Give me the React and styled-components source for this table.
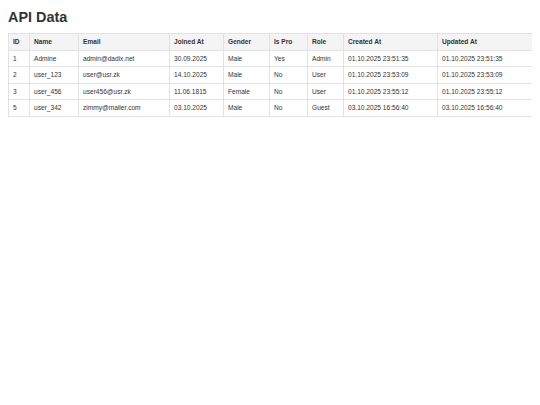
import React from "react";
import styled, { createGlobalStyle } from "styled-components";

const Global = createGlobalStyle`
  html, body { background: #ffffff; }
  body {
    margin: 8px;
    font-family: "Liberation Sans", Arial, Helvetica, sans-serif;
    color: #333333;
  }
`;

const Page = styled.div`
  display: flex;
  flex-direction: column;
  gap: 7px;
`;

const Title = styled.h1`
  margin: 0;
  font-size: 14.4px;
  line-height: 18px;
  font-weight: 700;
  color: #333333;
`;

const Table = styled.table`
  width: 524px;
  border-collapse: collapse;
  table-layout: fixed;
  font-size: 6.6px;
  line-height: 7.6px;
`;

const Col = styled.col`
  width: ${(p) => p.$w}px;
`;

const Th = styled.th`
  background: #f4f4f4;
  border: 1px solid #e2e2e2;
  padding: 4px;
  text-align: left;
  font-weight: 700;
  color: #333333;
  white-space: nowrap;
`;

const Td = styled.td`
  border: 1px solid #e2e2e2;
  padding: 4px;
  text-align: left;
  color: #333333;
  white-space: nowrap;
`;

const columns = [
  ["ID", 21],
  ["Name", 49],
  ["Email", 91],
  ["Joined At", 54],
  ["Gender", 46],
  ["Is Pro", 38],
  ["Role", 36],
  ["Created At", 94],
  ["Updated At", 95],
];

const rows = [
  ["1", "Admine", "admin@dadix.net", "30.09.2025", "Male", "Yes", "Admin", "01.10.2025 23:51:35", "01.10.2025 23:51:35"],
  ["2", "user_123", "user@usr.zk", "14.10.2025", "Male", "No", "User", "01.10.2025 23:53:09", "01.10.2025 23:53:09"],
  ["3", "user_456", "user456@usr.zk", "11.06.1815", "Female", "No", "User", "01.10.2025 23:55:12", "01.10.2025 23:55:12"],
  ["5", "user_342", "zimmy@mailer.com", "03.10.2025", "Male", "No", "Guest", "03.10.2025 16:56:40", "03.10.2025 16:56:40"],
];

export default function App() {
  return (
    <>
      <Global />
      <Page>
        <Title>API Data</Title>
        <Table>
          <colgroup>
            {columns.map(([label, w]) => (
              <Col key={label} $w={w} />
            ))}
          </colgroup>
          <thead>
            <tr>
              {columns.map(([label]) => (
                <Th key={label}>{label}</Th>
              ))}
            </tr>
          </thead>
          <tbody>
            {rows.map((r) => (
              <tr key={r[0]}>
                {r.map((c, i) => (
                  <Td key={i}>{c}</Td>
                ))}
              </tr>
            ))}
          </tbody>
        </Table>
      </Page>
    </>
  );
}
